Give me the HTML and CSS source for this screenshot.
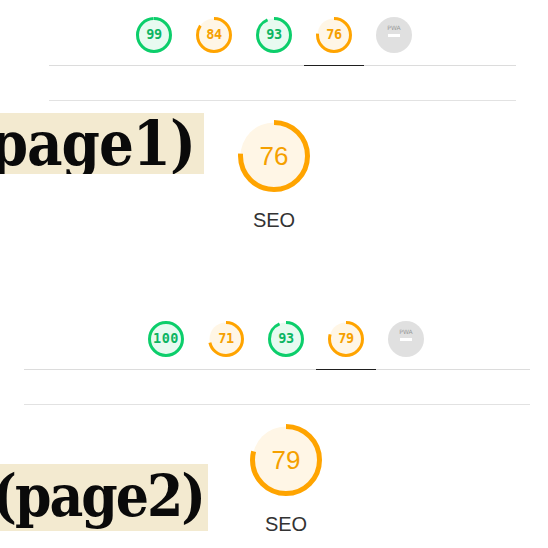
FILE: index.html
```html
<!DOCTYPE html>
<html>
<head>
<meta charset="utf-8">
<link rel="stylesheet" href="styles.css">
</head>
<body>
<section class="report r1">
  <div class="tabs">
    <div class="tab"><div class="mini pass"><svg viewBox="0 0 36 36"><circle class="base" cx="18" cy="18" r="16.5"/><circle class="arc" cx="18" cy="18" r="16.5" stroke-dasharray="102.6 103.7" transform="rotate(-90 18 18)"/></svg><span class="num">99</span></div></div>
    <div class="tab"><div class="mini avg"><svg viewBox="0 0 36 36"><circle class="base" cx="18" cy="18" r="16.5"/><circle class="arc" cx="18" cy="18" r="16.5" stroke-dasharray="87.1 103.7" transform="rotate(-90 18 18)"/></svg><span class="num">84</span></div></div>
    <div class="tab"><div class="mini pass"><svg viewBox="0 0 36 36"><circle class="base" cx="18" cy="18" r="16.5"/><circle class="arc" cx="18" cy="18" r="16.5" stroke-dasharray="96.4 103.7" transform="rotate(-90 18 18)"/></svg><span class="num">93</span></div></div>
    <div class="tab active"><div class="mini avg"><svg viewBox="0 0 36 36"><circle class="base" cx="18" cy="18" r="16.5"/><circle class="arc" cx="18" cy="18" r="16.5" stroke-dasharray="78.8 103.7" transform="rotate(-90 18 18)"/></svg><span class="num">76</span></div></div>
    <div class="tab"><div class="mini na"><span class="pwa">PWA</span><span class="dash"></span></div></div>
  </div>
  <div class="rule"></div>
  <div class="content">
    <div class="title"><span>Mobile (page1)</span></div>
    <div class="score">
      <div class="big avg"><svg viewBox="0 0 72 72"><circle class="base" cx="36" cy="36" r="33.5"/><circle class="arc" cx="36" cy="36" r="33.5" stroke-dasharray="160 210.5" transform="rotate(-90 36 36)"/></svg><span class="num">76</span></div>
      <div class="label">SEO</div>
    </div>
  </div>
</section>
<section class="report r2">
  <div class="tabs">
    <div class="tab"><div class="mini pass"><svg viewBox="0 0 36 36"><circle class="base" cx="18" cy="18" r="16.5"/><circle class="arc" cx="18" cy="18" r="16.5" stroke-dasharray="103.7 103.7" transform="rotate(-90 18 18)"/></svg><span class="num wide">100</span></div></div>
    <div class="tab"><div class="mini avg"><svg viewBox="0 0 36 36"><circle class="base" cx="18" cy="18" r="16.5"/><circle class="arc" cx="18" cy="18" r="16.5" stroke-dasharray="73.6 103.7" transform="rotate(-90 18 18)"/></svg><span class="num">71</span></div></div>
    <div class="tab"><div class="mini pass"><svg viewBox="0 0 36 36"><circle class="base" cx="18" cy="18" r="16.5"/><circle class="arc" cx="18" cy="18" r="16.5" stroke-dasharray="96.4 103.7" transform="rotate(-90 18 18)"/></svg><span class="num">93</span></div></div>
    <div class="tab active"><div class="mini avg"><svg viewBox="0 0 36 36"><circle class="base" cx="18" cy="18" r="16.5"/><circle class="arc" cx="18" cy="18" r="16.5" stroke-dasharray="81.9 103.7" transform="rotate(-90 18 18)"/></svg><span class="num">79</span></div></div>
    <div class="tab"><div class="mini na"><span class="pwa">PWA</span><span class="dash"></span></div></div>
  </div>
  <div class="rule"></div>
  <div class="content">
    <div class="title"><span>Mobile (page2)</span></div>
    <div class="score">
      <div class="big avg"><svg viewBox="0 0 72 72"><circle class="base" cx="36" cy="36" r="33.5"/><circle class="arc" cx="36" cy="36" r="33.5" stroke-dasharray="166.3 210.5" transform="rotate(-90 36 36)"/></svg><span class="num">79</span></div>
      <div class="label">SEO</div>
    </div>
  </div>
</section>
</body>
</html>
```

FILE: styles.css
```css
html, body {
  margin: 0;
  padding: 0;
  background: #fff;
}
body {
  font-family: "Liberation Sans", Arial, sans-serif;
  width: 548px;
  height: 548px;
  overflow: hidden;
}
.report {
  height: 304px;
}
.report.r2 {
  height: 244px;
}
.tabs {
  display: flex;
  border-bottom: 1px solid #dcdcdc;
}
.r1 .tabs, .r1 .rule {
  margin-left: 49px;
  width: 467px;
}
.r1 .tabs { padding-left: 75px; box-sizing: border-box; }
.r2 .tabs, .r2 .rule {
  margin-left: 24px;
  width: 506px;
}
.r2 .tabs { padding-left: 112px; box-sizing: border-box; }
.tab {
  width: 60px;
  padding: 17px 0 12px;
  display: flex;
  justify-content: center;
  border-bottom: 1px solid transparent;
  margin-bottom: -1px;
}
.tab.active {
  border-bottom-color: #1f1f1f;
}
.mini {
  width: 36px;
  height: 36px;
  display: grid;
  place-items: center;
}
.mini svg, .big svg {
  grid-area: 1 / 1;
  width: 100%;
  height: 100%;
  display: block;
}
.mini .num, .big .num {
  grid-area: 1 / 1;
}
.mini .num {
  font-family: "DejaVu Sans Mono", monospace;
  font-weight: bold;
  font-size: 13.5px;
  line-height: 1;
  letter-spacing: -0.3px;
}
.mini .num.wide {
  letter-spacing: 0.5px;
}
.mini circle.base, .big circle.base {
  stroke: none;
}
.mini circle.arc {
  fill: none;
  stroke-width: 3;
}
.big circle.arc {
  fill: none;
  stroke-width: 5;
}
.pass circle.base { fill: #e7faf0; }
.pass circle.arc { stroke: #0cce6b; }
.pass .num { color: #0cb562; }
.avg circle.base { fill: #fff6e6; }
.avg circle.arc { stroke: #ffa400; }
.avg .num { color: #f5a000; }
.mini.na {
  border-radius: 50%;
  background: #e0e0e0;
  display: flex;
  flex-direction: column;
  align-items: center;
  justify-content: flex-start;
}
.pwa {
  font-family: "DejaVu Sans", sans-serif;
  font-size: 6px;
  line-height: 6px;
  color: #9a9a9a;
  margin-top: 8px;
}
.dash {
  width: 12px;
  height: 3px;
  background: #fff;
  margin-top: 3px;
}
.rule {
  margin-top: 34px;
  border-top: 1px solid #e2e2e2;
}
.content {
  display: flex;
  align-items: flex-start;
}
.title {
  background: #f3ead0;
  display: flex;
  justify-content: flex-end;
  align-items: center;
  overflow: hidden;
  white-space: nowrap;
  box-sizing: border-box;
  font-family: "DejaVu Serif", serif;
  font-stretch: condensed;
  font-weight: bold;
  font-size: 61px;
  letter-spacing: -1px;
  color: #0a0a0a;
}
.r1 .title {
  width: 204px;
  height: 61px;
  margin-top: 12px;
  padding-right: 9px;
}
.r2 .title {
  width: 208px;
  height: 67px;
  margin-top: 59px;
  padding-right: 4px;
  padding-bottom: 4px;
  font-size: 58px;
  letter-spacing: -2px;
}
.score {
  width: 100px;
  display: flex;
  flex-direction: column;
  align-items: center;
}
.r1 .score { margin-left: 20px; }
.r2 .score { margin-left: 28px; }
.big {
  width: 72px;
  height: 72px;
  margin-top: 19px;
  display: grid;
  place-items: center;
}
.big .num {
  font-size: 26px;
  line-height: 1;
}
.label {
  margin-top: 16px;
  font-size: 20px;
  line-height: 24px;
  color: #333;
}
```
